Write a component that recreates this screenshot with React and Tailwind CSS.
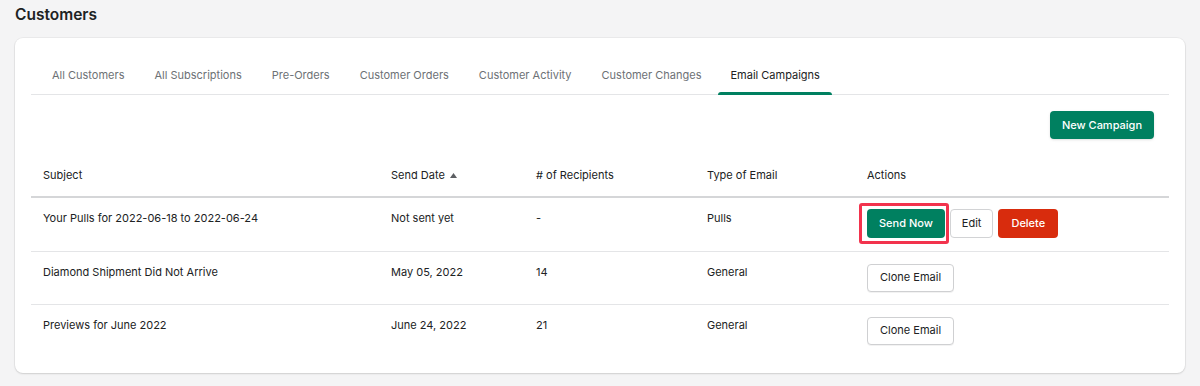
import React from "react";

const tabs = [
    "All Customers",
    "All Subscriptions",
    "Pre-Orders",
    "Customer Orders",
    "Customer Activity",
    "Customer Changes",
    "Email Campaigns",
];

const campaigns = [
    { subject: "Your Pulls for 2022-06-18 to 2022-06-24", date: "Not sent yet", recipients: "-", type: "Pulls", pending: true },
    { subject: "Diamond Shipment Did Not Arrive", date: "May 05, 2022", recipients: "14", type: "General" },
    { subject: "Previews for June 2022", date: "June 24, 2022", recipients: "21", type: "General" },
];

const App = () => {
    return (
        <div
            className="min-h-screen bg-[#f4f4f5] px-[15px] pt-[4px] text-[#202223]"
            style={{ fontFamily: "Inter, 'Noto Sans', sans-serif" }}
        >
            <h1 className="text-[15.5px] font-semibold leading-[22px]">Customers</h1>

            <div className="mt-[12px] rounded-lg bg-white px-4 pt-4 pb-4 shadow-[0_0_0_1px_rgba(0,0,0,0.04),0_1px_2px_rgba(0,0,0,0.12)]">
                <div className="flex gap-[4px] border-b border-[#e4e5e7] pl-2">
                    {tabs.map((tab, i) => {
                        const active = i === tabs.length - 1;
                        return (
                            <button
                                key={tab}
                                className={`relative h-[40px] pt-[3px] text-[11px] ${
                                    active ? "px-[12px] text-[#202223]" : "px-[13px] text-[#6d7175]"
                                }`}
                            >
                                {tab}
                                {active && (
                                    <span className="absolute left-0 right-0 bottom-[-1px] h-[3px] rounded-t bg-[#008060]" />
                                )}
                            </button>
                        );
                    })}
                </div>

                <div className="mt-4 flex justify-end pr-[15px]">
                    <button className="h-[28px] rounded bg-[#008060] px-[12px] text-[11px] font-medium text-white shadow-sm">
                        New Campaign
                    </button>
                </div>

                <table className="mt-[16px] w-full table-fixed border-collapse text-[11px]">
                    <colgroup>
                        <col className="w-[348px]" />
                        <col className="w-[145px]" />
                        <col className="w-[171px]" />
                        <col className="w-[160px]" />
                        <col />
                    </colgroup>
                    <thead>
                        <tr className="border-b-2 border-[#d5d6d8] text-left">
                            <th className="px-3 pt-[12px] pb-[12px] font-normal">Subject</th>
                            <th className="px-3 pt-[12px] pb-[12px] font-normal">
                                <span className="inline-flex items-center gap-[5px]">
                                    Send Date
                                    <svg width="7" height="5" viewBox="0 0 7 5" className="fill-[#5c5f62]">
                                        <path d="M0 5 L3.5 0 L7 5 Z" />
                                    </svg>
                                </span>
                            </th>
                            <th className="px-3 pt-[12px] pb-[12px] font-normal"># of Recipients</th>
                            <th className="px-3 pt-[12px] pb-[12px] font-normal">Type of Email</th>
                            <th className="px-3 pt-[12px] pb-[12px] font-normal">Actions</th>
                        </tr>
                    </thead>
                    <tbody>
                        {campaigns.map((c) => (
                            <tr key={c.subject} className="border-b border-[#e4e5e7] last:border-b-0 align-top">
                                <td className="px-3 pt-[12px]">{c.subject}</td>
                                <td className="px-3 pt-[12px]">{c.date}</td>
                                <td className="px-3 pt-[12px]">{c.recipients}</td>
                                <td className="px-3 pt-[12px]">{c.type}</td>
                                <td className={`px-3 ${c.pending ? "pt-[11px] pb-[13px]" : "py-3"}`}>
                                    {c.pending ? (
                                        <div className="flex items-center gap-[5px]">
                                            <div className="relative">
                                                <span className="pointer-events-none absolute -top-[6px] -bottom-[6px] -left-[8px] -right-[4px] rounded-[3px] border-[3px] border-[#f2334d]" />
                                                <button className="h-[29px] rounded bg-[#008060] px-[12px] font-medium text-white">
                                                    Send Now
                                                </button>
                                            </div>
                                            <button className="h-[29px] rounded border border-[#d2d3d5] bg-white px-[11px] text-[#202223]">
                                                Edit
                                            </button>
                                            <button className="h-[29px] rounded bg-[#d82c0d] px-[13px] font-medium text-white">
                                                Delete
                                            </button>
                                        </div>
                                    ) : (
                                        <button className="h-[28px] rounded border border-[#cfd0d2] bg-white px-[12px] text-[#202223] shadow-[0_1px_0_rgba(0,0,0,0.05)]">
                                            Clone Email
                                        </button>
                                    )}
                                </td>
                            </tr>
                        ))}
                    </tbody>
                </table>
            </div>
        </div>
    );
};

export default App;
